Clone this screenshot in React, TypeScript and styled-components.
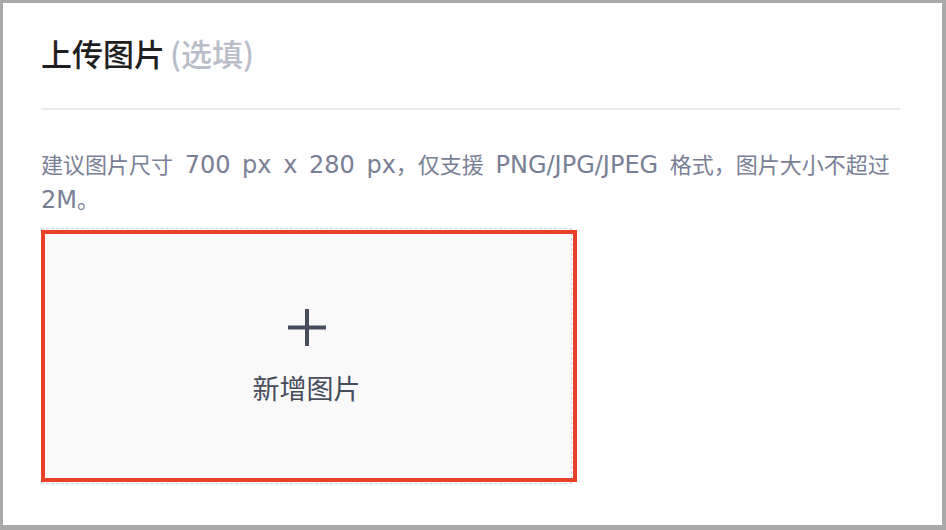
import React from 'react';
import styled, { createGlobalStyle } from 'styled-components';

const GlobalStyle = createGlobalStyle`
  html, body {
    margin: 0;
    padding: 0;
    background: #ffffff;
  }
  * {
    box-sizing: border-box;
  }
`;

const Frame = styled.div`
  width: 946px;
  height: 530px;
  border-style: solid;
  border-color: #a9a9a9;
  border-width: 3px 4px 5px 3px;
  background: #ffffff;
  padding: 28px 42px 0 38px;
  font-family: "Noto Sans CJK SC", sans-serif;
  overflow: hidden;
`;

const Title = styled.h2`
  margin: 0;
  font-size: 31px;
  line-height: 44px;
  font-weight: 500;
  color: #1f1f22;
  display: flex;
  align-items: baseline;
  gap: 5px;
`;

const Optional = styled.span`
  color: #b8bdc9;
  font-weight: 500;
`;

const Divider = styled.hr`
  margin: 33px 0 0;
  border: none;
  height: 2px;
  background: #e8e9ee;
`;

const Hint = styled.p`
  margin: 37px 0 0;
  font-size: 22px;
  line-height: 33px;
  color: #798095;
`;

// latin runs in the hint are set wider than the CJK glyphs around them
const Latin = styled.span`
  font-family: "DejaVu Sans", sans-serif;
  font-size: 24px;
  word-spacing: 4px;
`;

const UploadWrap = styled.div`
  position: relative;
  margin-top: 11px;
  width: 531px;
  height: 256px;
`;

const UploadBox = styled.button`
  width: 100%;
  height: 100%;
  border: 1.5px dashed #d3d5da;
  background: #f9f9f9;
  display: flex;
  flex-direction: column;
  align-items: center;
  justify-content: center;
  gap: 26px;
  padding: 0;
  cursor: pointer;
  font-family: "Noto Sans CJK SC", sans-serif;
`;

const UploadLabel = styled.span`
  font-size: 27px;
  line-height: 32px;
  color: #474d5c;
`;

const Highlight = styled.div`
  position: absolute;
  left: 0;
  top: 2px;
  width: 536px;
  height: 252px;
  border: 4px solid #e8412a;
  pointer-events: none;
`;

const PlusIcon = () => (
  <svg width="38" height="37" viewBox="0 0 38 37" fill="none">
    <path d="M19 0v37M0 18.5h38" stroke="#474d5c" strokeWidth="4" />
  </svg>
);

export default function App() {
  return (
    <>
      <GlobalStyle />
      <Frame>
        <Title>
          上传图片<Optional>(选填)</Optional>
        </Title>
        <Divider />
        <Hint>
          建议图片尺寸<Latin> 700 px x 280 px</Latin>，仅支援<Latin> PNG/JPG/JPEG </Latin>格式，图片大小不超过<Latin>2M</Latin>。
        </Hint>
        <UploadWrap>
          <UploadBox type="button">
            <PlusIcon />
            <UploadLabel>新增图片</UploadLabel>
          </UploadBox>
          <Highlight />
        </UploadWrap>
      </Frame>
    </>
  );
}
